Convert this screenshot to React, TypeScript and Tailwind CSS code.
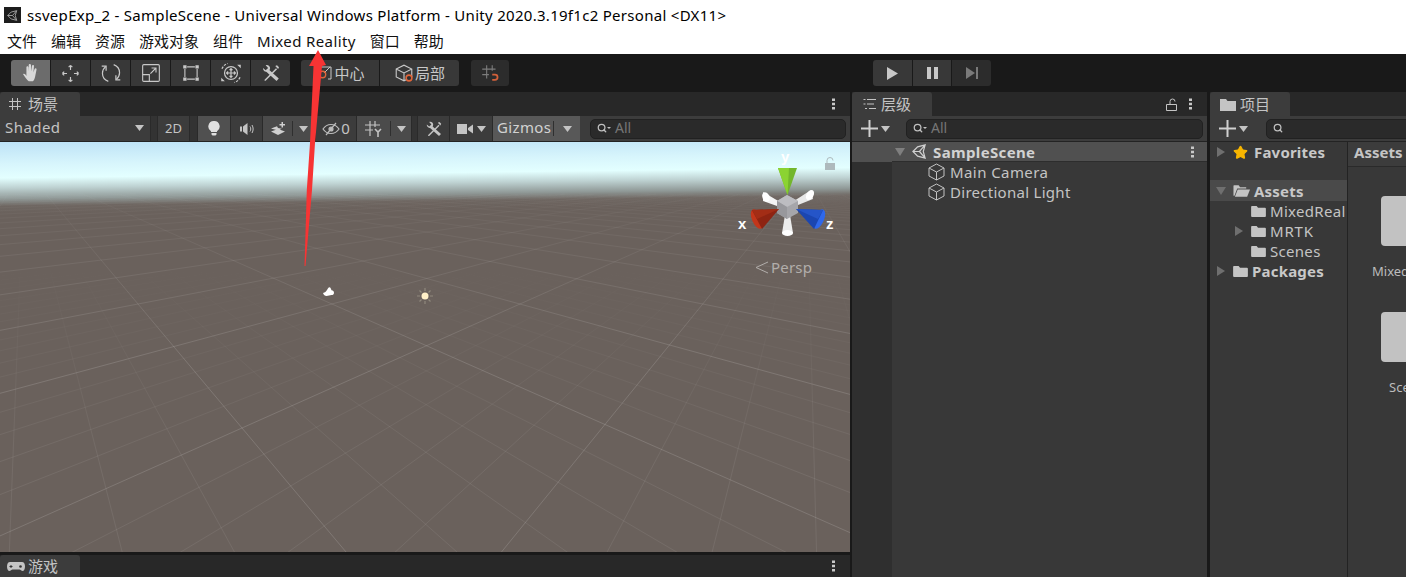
import type { ReactNode } from "react";
import { Search, Star } from "lucide-react";

// grid corners measured off the scene view, viewport-local
const QUAD = [
  [138, 162],
  [363, 119],
  [520, 162],
  [242, 286],
];

function makeProjector() {
  const [[x0, y0], [x1, y1], [x2, y2], [x3, y3]] = QUAD;
  const dx1 = x1 - x2;
  const dx2 = x3 - x2;
  const sx = x0 - x1 + x2 - x3;
  const dy1 = y1 - y2;
  const dy2 = y3 - y2;
  const sy = y0 - y1 + y2 - y3;
  const den = dx1 * dy2 - dx2 * dy1;
  const g = (sx * dy2 - dx2 * sy) / den;
  const h = (dx1 * sy - sx * dy1) / den;
  const a = x1 - x0 + g * x1;
  const b = x3 - x0 + h * x3;
  const d = y1 - y0 + g * y1;
  const e = y3 - y0 + h * y3;
  return (u: number, v: number): [number, number] | null => {
    const s = u / 2;
    const t = (v + 1) / 2;
    const w = g * s + h * t + 1;
    if (w <= 0.02) return null;
    return [(a * s + b * t + x0) / w, (d * s + e * t + y0) / w];
  };
}

function gridSegments(step: number, skipMajor: boolean) {
  const project = makeProjector();
  const out: string[] = [];
  const RANGE = 30;
  const count = Math.round((RANGE * 2) / step);
  for (let i = 0; i <= count; i++) {
    const k = -RANGE + i * step;
    if (skipMajor && Math.abs(k - Math.round(k)) < 0.001) continue;
    for (const axis of [0, 1]) {
      let first: [number, number] | null = null;
      let last: [number, number] | null = null;
      for (let m = -RANGE; m <= RANGE; m += 0.5) {
        const p = axis === 0 ? project(k, m) : project(m, k);
        if (!p || p[1] < 52) continue;
        if (!first) first = p;
        last = p;
      }
      if (first && last) {
        out.push(`M${first[0].toFixed(1)} ${first[1].toFixed(1)}L${last[0].toFixed(1)} ${last[1].toFixed(1)}`);
      }
    }
  }
  return out.join("");
}

const majorPath = gridSegments(1, false);
const minorPath = gridSegments(0.2, true);

function Ico({ size = 18, children }: { size?: number; children: ReactNode }) {
  return (
    <svg width={size} height={size} viewBox="0 0 18 18" fill="none" stroke="currentColor" strokeWidth="1.2" className="shrink-0">
      {children}
    </svg>
  );
}

const HandIcon = () => (
  <Ico size={23}>
    <path
      d="M3.2 9.5c.9-.7 1.7.1 2.6 1.5V4.2c0-1.2 1.5-1.2 1.6 0l.2 3.3V2.6c0-1.3 1.7-1.3 1.8 0l.1 4.9.6-4.3c.2-1.2 1.8-1 1.6.3l-.4 4.8.9-2.8c.4-1.1 1.8-.7 1.5.5l-1.1 5.5c-.3 1.8-1.2 3-1.8 3.6H7.6C6.2 13.8 4.6 11.6 3.2 9.5z"
      fill="#d8d8d8"
      stroke="none"
    />
  </Ico>
);
const MoveIcon = () => (
  <Ico size={21}>
    <path d="M9 6V2M9 2 7.400 3.600M9 2l1.600 1.600M9 12v4m0 0-1.600-1.600M9 16l1.600-1.600M6 9H2m0 0 1.600-1.600M2 9l1.600 1.600M12 9h4m0 0-1.600-1.600M16 9l-1.600 1.600" strokeWidth="1" />
  </Ico>
);
const RotateIcon = () => (
  <Ico size={22}>
    <path d="M6.800 15.800C3.800 14.700 2 12 2 9.200c0-2.200 1-4 2.600-5.400M11.200 2.200c3 1.100 4.800 3.800 4.800 6.600 0 2.200-1 4-2.600 5.400" strokeWidth="1" />
    <path d="M5 7.200V3.400H1.400M13 10.800v3.800h3.600" strokeWidth="1" />
  </Ico>
);
const ScaleIcon = () => (
  <Ico size={20}>
    <rect x="1.500" y="1.500" width="15" height="15" rx="1" strokeWidth="1" />
    <path d="M1.500 10.500H7.500V16.500M8.500 9.500l5-5M9.500 4.500h4v4" strokeWidth="1" />
  </Ico>
);
const RectIcon = () => (
  <Ico size={20}>
    <path d="M3.500 3.500h11v11h-11z" strokeDasharray="7 4" strokeDashoffset="-2" strokeWidth="1" />
    <path d="M2 2h3v3H2zM13 2h3v3h-3zM2 13h3v3H2zM13 13h3v3h-3z" fill="currentColor" stroke="none" />
  </Ico>
);
const TransformIcon = () => (
  <Ico size={22}>
    <circle cx="9" cy="9" r="5.300" strokeWidth="1" />
    <path d="M9 5.500v7M5.500 9h7M7.800 6.600 9 5.400l1.200 1.200M7.800 11.400 9 12.600l1.200-1.200M6.600 7.800 5.400 9l1.200 1.200M11.400 7.800 12.600 9l-1.200 1.200" strokeWidth="1" />
    <path d="M1.600 5.500C2.600 3.200 4.200 1.900 6.200 1.200M16.400 12.500c-1 2.300-2.600 3.600-4.600 4.300" strokeDasharray="2 1" strokeWidth="1" />
    <path d="M1 15.800V12.800l3 3zM17 2.200v3l-3-3z" fill="currentColor" stroke="none" />
  </Ico>
);
const ToolsIcon = ({ size = 20 }: { size?: number }) => (
  <Ico size={size}>
    <path d="M5.500 6.500 15 15" strokeWidth="3" />
    <path d="M1.800 4.400 4.200 6.600l2.200-2.200L4.200 2c1.900-.7 4 .6 4 2.800 0 1.700-1.800 3.300-3.500 3.100-1.800-.2-3.100-1.800-2.900-3.500z" fill="currentColor" stroke="none" />
    <path d="M3.200 15 13.500 4.700l1 1L4.200 16H3.200z" fill="currentColor" stroke="none" />
    <path d="M12.800 2.800 15.400 5.400 16.200 3.800 14.400 2z" fill="currentColor" stroke="none" />
  </Ico>
);
const CenterIcon = () => (
  <Ico size={18}>
    <path d="M4 6V3h12v12h-3" strokeWidth="1" />
    <path d="M15 3 9 9" strokeWidth="1" />
    <circle cx="7.500" cy="10.500" r="3.200" stroke="#e0653a" strokeWidth="1.400" />
  </Ico>
);
const LocalIcon = () => (
  <Ico size={20}>
    <path d="M2 5.500 9 2l7 3.500v7L9 16l-7-3.500zM2 5.500 9 9l7-3.500M9 9v7" strokeWidth="1" />
    <circle cx="13.500" cy="13.500" r="2.600" fill="#2f2f2f" stroke="#e0653a" strokeWidth="1.400" />
  </Ico>
);
const SnapIcon = () => (
  <Ico size={20}>
    <path d="M6 2v12M11 2v5M2 5.500h12M2 10.500h6" strokeWidth="1" stroke="#7c7c7c" />
    <path d="M11 10.500h2.500a2.300 2.300 0 0 1 0 4.600H11" strokeWidth="1.600" stroke="#d2603a" />
  </Ico>
);
const Caret = ({ className = "text-[#c4c4c4]" }: { className?: string }) => (
  <svg width="9" height="6" viewBox="0 0 9 6" className={`shrink-0 ${className}`}>
    <path d="M0 0h9L4.500 6z" fill="currentColor" />
  </svg>
);
const MoreDots = ({ className = "" }: { className?: string }) => (
  <svg width="3" height="12" viewBox="0 0 3 12" className={`shrink-0 ${className}`}>
    <path d="M0 .5h3v2.500H0zM0 4.800h3v2.500H0zM0 9h3v2.500H0z" fill="#c8c8c8" />
  </svg>
);
const CubeIcon = () => (
  <svg width="17" height="18" viewBox="0 0 17 18" fill="none" stroke="#c2c2c2" strokeWidth="1" className="shrink-0">
    <path d="M8.500 1 16 5v8l-7.500 4L1 13V5zM1 5l7.500 4L16 5M8.500 9v8" />
  </svg>
);
const FolderIcon = () => (
  <svg width="15" height="12" viewBox="0 0 16 13" className="shrink-0">
    <path d="M1 1h5l1.500 2H15a1 1 0 0 1 1 1v8a1 1 0 0 1-1 1H1a1 1 0 0 1-1-1V2a1 1 0 0 1 1-1z" fill="#c4c4c4" />
  </svg>
);
const OpenFolderIcon = () => (
  <svg width="17" height="13" viewBox="0 0 18 13" className="shrink-0">
    <path d="M1 1h5l1.500 2H14v1.500H4.500L1.600 12H.5V1.500z" fill="#c4c4c4" />
    <path d="M5 5.500h13L15 13H2z" fill="#c4c4c4" />
  </svg>
);
const UnityLogo = ({ size = 16, color = "#d0d0d0" }: { size?: number; color?: string }) => (
  <svg width={size} height={size} viewBox="0 0 16 16" fill="none" stroke={color} strokeWidth="1.300" className="shrink-0">
    <path d="M1 8l5-5 8-2-2 7 2 7-8-2zM1 8h7l6-7M8 8l6 7" />
  </svg>
);

function ToolButton({ w, active, dim, children }: { w: string; active?: boolean; dim?: boolean; children: ReactNode }) {
  return (
    <div className={`${w} flex h-full items-center justify-center gap-[1px] ${active ? "bg-[#6c6c6c]" : dim ? "bg-[#2c2c2c]" : "bg-[#383838]"} text-[#c8c8c8]`}>
      {children}
    </div>
  );
}

function TabBar({ icon, label, right, short }: { icon: ReactNode; label: string; right?: ReactNode; short?: boolean }) {
  return (
    <div className={`flex ${short ? "h-[22px]" : "h-[24px]"} shrink-0 items-stretch bg-[#282828]`}>
      <div className={`flex w-[80px] items-center gap-[3px] rounded-t-[3px] bg-[#3c3c3c] pl-[8px] ${short ? "pt-[1px]" : ""} text-[15px] leading-none text-[#c4c4c4]`}>
        {icon}
        <span>{label}</span>
      </div>
      <div className="flex flex-1 items-center justify-end gap-[12px] pr-[15px]">{right}</div>
    </div>
  );
}

function SearchBox({ icon = true, text }: { icon?: boolean; text?: string }) {
  return (
    <div className="flex h-[20px] flex-1 items-center gap-[4px] rounded-[5px] border border-[#212121] bg-[#2a2a2a] pb-[1px] pl-[6px] text-[14px] leading-none text-[#767676]">
      <Search size={10} strokeWidth={3} className="text-[#c0c0c0]" />
      {icon && <span className="-ml-[4px] h-0 w-0 border-x-[2px] border-t-[2px] border-x-transparent border-t-[#c0c0c0]" />}
      {text && <span>{text}</span>}
    </div>
  );
}

function PlusMenu() {
  return (
    <div className="flex w-[50px] shrink-0 items-center gap-[3px] pl-[9px] text-[#d0d0d0]">
      <svg width="17" height="17" viewBox="0 0 17 17">
        <path d="M7.500 0h2v7.500H17v2H9.500V17h-2V9.500H0v-2h7.500z" fill="currentColor" />
      </svg>
      <Caret />
    </div>
  );
}

function SceneCell({ w, tone = "bg-[#3c3c3c]", children }: { w: string; tone?: string; children: ReactNode }) {
  return <div className={`${w} flex h-full shrink-0 items-center justify-center gap-[4px] border-r border-[#2a2a2a] ${tone} text-[#c4c4c4]`}>{children}</div>;
}

function Gizmo() {
  return (
    <svg width="120" height="135" viewBox="0 0 120 135" className="absolute left-[730px] top-[3px]">
      {/* white neutral cones */}
      <path d="M33 47 50 57 47 61 33 56z" fill="#f4f4f4" />
      <ellipse cx="36" cy="52" rx="3.500" ry="5" fill="#fff" transform="rotate(-25 36 52)" />
      <path d="M81 45 64 56l4 4 15-6z" fill="#e8e8e8" />
      <ellipse cx="80" cy="50" rx="3.500" ry="5.500" fill="#fff" transform="rotate(30 80 50)" />
      <path d="M55 70 52 88h11l-3-18z" fill="#ececec" />
      <ellipse cx="57.500" cy="88" rx="5.500" ry="3" fill="#fff" />
      {/* cube */}
      <path d="M57 50 68 56v12l-11 6-10-6V56z" fill="#a6a6aa" />
      <path d="M47 56 57 50l11 6-11 6z" fill="#bdbdc1" />
      <path d="M57 62v12l-10-6V56z" fill="#98989c" />
      {/* axis cones */}
      <path d="M48 23h19L57.500 50z" fill="#73b62c" />
      <path d="M48 23h11L57.500 50z" fill="#8bd332" />
      <ellipse cx="27" cy="74" rx="5" ry="10.500" fill="#c2361b" transform="rotate(-24 27 74)" />
      <path d="M49 64 22 65 32 84z" fill="#8e2412" />
      <path d="M49 64 22 65 27 74z" fill="#a32d16" />
      <ellipse cx="89" cy="74" rx="5" ry="10.500" fill="#2f68ea" transform="rotate(24 89 74)" />
      <path d="M66 64 93 65 84 84z" fill="#1b46b0" />
      <path d="M66 64 93 65 88 74z" fill="#2555c8" />
      <text x="51" y="17" fontFamily="Liberation Sans" fontWeight="700" fontSize="15" fill="#fff">y</text>
      <text x="8" y="84" fontFamily="Liberation Sans" fontWeight="700" fontSize="15" fill="#fff">x</text>
      <text x="96" y="84" fontFamily="Liberation Sans" fontWeight="700" fontSize="15" fill="#fff">z</text>
      <path d="M97 18v-2.500a3 3 0 0 1 6 0" fill="none" stroke="#aebabd" strokeWidth="1" />
      <rect x="95" y="18" width="10" height="7" fill="#aebabd" />
    </svg>
  );
}

function Viewport() {
  return (
    <div className="relative flex-1 overflow-hidden bg-[linear-gradient(179.3deg,#bde2f6_0px,#d7f5fc_22px,#e3ffff_36px,#bed2d2_46px,#8f9896_57px,#6e6661_64px,#6a615c_72px)]">
      <svg width="850" height="410" viewBox="0 0 850 410" className="absolute left-0 top-0">
        <defs>
          <linearGradient id="majorFade" gradientUnits="userSpaceOnUse" x1="0" y1="55" x2="0" y2="220">
            <stop offset="0" stopColor="#fff" stopOpacity="0.02" />
            <stop offset="1" stopColor="#fff" stopOpacity="0.14" />
          </linearGradient>
          <linearGradient id="minorFade" gradientUnits="userSpaceOnUse" x1="0" y1="120" x2="0" y2="320">
            <stop offset="0" stopColor="#fff" stopOpacity="0" />
            <stop offset="1" stopColor="#fff" stopOpacity="0.07" />
          </linearGradient>
        </defs>
        <path d={minorPath} stroke="url(#minorFade)" strokeWidth="1" fill="none" />
        <path d={majorPath} stroke="url(#majorFade)" strokeWidth="1" fill="none" />
        <path d="M323 151c2-.5 3-1.500 4-3 .5-1 1.500-2.800 2.500-2.800s1.500 1.500 2 3c1.500 0 2.500 1 2.500 2.500 0 1.500-1 2.300-2.500 2.300l-5 1c-1.500 0-3-1-3.500-3z" fill="#fff" />
        <g stroke="#8f887c" strokeWidth="1.200">
          <path d="M425 146v3M425 159v3M417 154h3M430 154h3M419.500 148.500l2 2M428.500 157.500l2 2M419.500 159.500l2-2M428.500 150.500l2-2" />
        </g>
        <circle cx="425" cy="154" r="3.500" fill="#fff0c8" />
      </svg>
      <Gizmo />
      <div className="absolute left-[755px] top-[115px] flex items-center gap-[3px] text-[15px] leading-[20px] text-[#b2aeab]">
        <svg width="13" height="13" viewBox="0 0 13 13" fill="none" stroke="currentColor" strokeWidth="1">
          <path d="M13 1 1 6.500 13 12" />
        </svg>
        <span className="tracking-[0.2px]">Persp</span>
      </div>
    </div>
  );
}

function SceneToolbar() {
  return (
    <div className="flex h-[26px] shrink-0 items-stretch border-b border-[#232323] bg-[#3c3c3c] text-[15px] leading-none">
      <div className="flex w-[150px] shrink-0 items-center justify-between pb-[2px] pl-[5px] pr-[6px] text-[#c4c4c4]">
        <span className="tracking-[0.45px]">Shaded</span>
        <Caret />
      </div>
      <div className="w-[8px] shrink-0 border-x border-[#2a2a2a] bg-[#333333]" />
      <SceneCell w="w-[32px]">
        <span className="text-[13px]">2D</span>
      </SceneCell>
      <div className="w-[8px] shrink-0 border-r border-[#2a2a2a] bg-[#333333]" />
      <SceneCell w="w-[33px]" tone="bg-[#505050]">
        <svg width="12" height="15" viewBox="0 0 12 15">
          <path d="M6 0a5.500 5.500 0 0 1 3 10.200V11H3v-.8A5.500 5.500 0 0 1 6 0zM3.500 12h5v1.500l-1 1h-3l-1-1z" fill="#e0e0e0" />
        </svg>
      </SceneCell>
      <SceneCell w="w-[32px]">
        <svg width="16" height="12" viewBox="0 0 16 12">
          <path d="M1 3.500h2v5H1zM4 3.500 8.500 0v12L4 8.500z" fill="#c4c4c4" />
          <path d="M11 3.500c1 1.500 1 3.500 0 5M13 2c1.500 2.500 1.500 5.500 0 8" stroke="#c4c4c4" fill="none" />
        </svg>
      </SceneCell>
      <div className="flex w-[53px] shrink-0 items-center gap-[6px] border-r border-[#2a2a2a] bg-[#4b4b4b] pl-[7px]">
        <svg width="16" height="14" viewBox="0 0 16 14">
          <path d="M1 9.500 8 7l7 2.500L8 13zM1 6.500 7 4.200l1 1.800 3.800.7L8 8.500zM11.500 0h1.500v2h2v1.500h-2v2h-1.500v-2h-2V2h2z" fill="#d0d0d0" />
        </svg>
        <div className="h-[15px] w-px bg-[#2f2f2f]" />
        <Caret />
      </div>
      <SceneCell w="w-[41px]">
        <svg width="18" height="14" viewBox="0 0 18 14" fill="none" stroke="#bdbdbd" strokeWidth="1.200">
          <path d="M1 7c2-3 5-4.500 8-4.500S15 4 17 7c-2 3-5 4.500-8 4.500S3 10 1 7zM4 13 14 1" />
          <circle cx="9" cy="7" r="2" fill="#bdbdbd" />
        </svg>
        <span className="-ml-[3px] pb-[1px]">0</span>
      </SceneCell>
      <div className="flex w-[55px] shrink-0 items-center border-r border-[#2a2a2a] bg-[#4b4b4b]">
        <div className="flex w-[33px] justify-center">
          <svg width="18" height="16" viewBox="0 0 18 16" fill="none" stroke="#c4c4c4" strokeWidth="1.200">
            <path d="M5 0v15M10 0v6M0 4h15M0 9h8" />
            <path d="M10 8l3 3 3-3M13 11v5" strokeWidth="1.600" />
          </svg>
        </div>
        <div className="h-[15px] w-px bg-[#2f2f2f]" />
        <div className="flex flex-1 justify-center">
          <Caret />
        </div>
      </div>
      <div className="w-[6px] shrink-0 border-r border-[#2a2a2a] bg-[#333333]" />
      <SceneCell w="w-[32px]">
        <ToolsIcon size={18} />
      </SceneCell>
      <SceneCell w="w-[43px]">
        <svg width="16" height="12" viewBox="0 0 16 12">
          <path d="M0 1h10v10H0zM11 5l5-3.500v9L11 7z" fill="#c4c4c4" />
        </svg>
        <Caret />
      </SceneCell>
      <div className="flex w-[87px] shrink-0 items-center bg-[#585858] text-[#d2d2d2]">
        <span className="w-[60px] pb-[2px] pl-[4px] tracking-[0.35px]">Gizmos</span>
        <div className="h-[15px] w-px bg-[#2f2f2f]" />
        <div className="flex flex-1 justify-center">
          <Caret />
        </div>
      </div>
      <div className="flex flex-1 items-center px-[4px] pl-[10px]">
        <SearchBox text="All" />
      </div>
    </div>
  );
}

function ProjectPanel() {
  const rowBold = "font-bold text-[#c8c8c8] tracking-[0.2px]";
  return (
    <div className="flex w-[196px] shrink-0 flex-col bg-[#383838]">
      <TabBar
        icon={
          <svg width="16" height="13" viewBox="0 0 16 13" className="ml-[2px] mr-[1px] shrink-0">
            <path d="M0 1h6l1.500 2H16v10H0z" fill="#c4c4c4" />
          </svg>
        }
        label="项目"
      />
      <div className="flex h-[26px] shrink-0 items-center border-b border-[#232323] bg-[#3c3c3c]">
        <PlusMenu />
        <div className="-mr-[20px] ml-[6px] flex flex-1">
          <SearchBox icon={false} />
        </div>
      </div>
      <div className="flex min-h-0 flex-1 overflow-hidden">
        <div className="w-[138px] shrink-0 overflow-hidden border-r border-[#232323] text-[15px] leading-[20px]">
          <div className="flex h-[20px] items-center pl-[7px]">
            <span className="h-0 w-0 border-y-[5px] border-l-[8px] border-y-transparent border-l-[#6f6f6f]" />
            <Star size={15} fill="#f7b500" stroke="#f7b500" className="ml-[8px]" />
            <span className={`ml-[6px] ${rowBold}`}>Favorites</span>
          </div>
          <div className="mt-[18px] flex h-[21px] items-center bg-[#4a4a4a] pl-[6px]">
            <span className="h-0 w-0 border-x-[5px] border-t-[8px] border-x-transparent border-t-[#6f6f6f]" />
            <span className="ml-[7px] flex">
              <OpenFolderIcon />
            </span>
            <span className={`ml-[4px] ${rowBold}`}>Assets</span>
          </div>
          <div className="flex h-[20px] items-center pl-[41px] text-[#c4c4c4]">
            <FolderIcon />
            <span className="ml-[4px] whitespace-nowrap tracking-[0.3px]">MixedReal</span>
          </div>
          <div className="flex h-[20px] items-center pl-[25px] text-[#c4c4c4]">
            <span className="h-0 w-0 border-y-[5px] border-l-[8px] border-y-transparent border-l-[#6f6f6f]" />
            <span className="ml-[8px] flex">
              <FolderIcon />
            </span>
            <span className="ml-[4px] tracking-[0.8px]">MRTK</span>
          </div>
          <div className="flex h-[20px] items-center pl-[41px] text-[#c4c4c4]">
            <FolderIcon />
            <span className="ml-[4px] tracking-[0.3px]">Scenes</span>
          </div>
          <div className="flex h-[20px] items-center pl-[7px]">
            <span className="h-0 w-0 border-y-[5px] border-l-[8px] border-y-transparent border-l-[#6f6f6f]" />
            <span className="ml-[8px] flex">
              <FolderIcon />
            </span>
            <span className={`ml-[4px] ${rowBold}`}>Packages</span>
          </div>
        </div>
        <div className="relative flex-1 overflow-hidden">
          <div className="flex h-[25px] items-center border-b border-[#2a2a2a] bg-[#3c3c3c] pb-[3px] pl-[6px] text-[15px] font-bold text-[#c4c4c4]">Assets</div>
          <div className="flex flex-col pl-[33px] pt-[29px]">
            <div className="h-[50px] w-[60px] rounded-[4px] bg-[#c2c2c2]" />
            <div className="-ml-[9px] mt-[16px] h-[20px] text-[13px] leading-[18px] text-[#bcbcbc]">Mixed</div>
            <div className="mt-[30px] h-[50px] w-[60px] rounded-[4px] bg-[#c2c2c2]" />
            <div className="ml-[8px] mt-[16px] text-[13px] leading-[18px] text-[#bcbcbc]">Sce</div>
          </div>
        </div>
      </div>
    </div>
  );
}

export default function App() {
  return (
    <div className="relative flex h-[577px] w-[1406px] flex-col overflow-hidden bg-[#191919] font-['Noto_Sans','Noto_Sans_CJK_SC',sans-serif]">
      {/* window chrome */}
      <div className="flex h-[30px] shrink-0 items-center bg-white pl-[4px] text-[15px] text-black">
        <div className="flex h-[16px] w-[17px] items-center justify-center bg-[#1d1d1d]">
          <UnityLogo size={11} color="#a8a8a8" />
        </div>
        <span className="ml-[6px] whitespace-nowrap tracking-[0.29px]">ssvepExp_2 - SampleScene - Universal Windows Platform - Unity 2020.3.19f1c2 Personal &lt;DX11&gt;</span>
      </div>
      <div className="flex h-[24px] shrink-0 items-start gap-[14px] bg-white pl-[7px] text-[15px] leading-[22px] text-[#111]">
        {["文件", "编辑", "资源", "游戏对象", "组件"].map((m) => (
          <span key={m}>{m}</span>
        ))}
        <span className="tracking-[0.38px]">Mixed Reality</span>
        {["窗口", "帮助"].map((m) => (
          <span key={m}>{m}</span>
        ))}
      </div>

      {/* main toolbar */}
      <div className="relative flex h-[38px] shrink-0 items-start pl-[11px] pt-[6px]">
        <div className="flex h-[26px] w-[279px] gap-px overflow-hidden rounded-[3px]">
          <ToolButton w="w-[39px]" active>
            <HandIcon />
          </ToolButton>
          <ToolButton w="w-[39px]">
            <MoveIcon />
          </ToolButton>
          <ToolButton w="w-[39px]">
            <RotateIcon />
          </ToolButton>
          <ToolButton w="w-[39px]">
            <ScaleIcon />
          </ToolButton>
          <ToolButton w="w-[39px]">
            <RectIcon />
          </ToolButton>
          <ToolButton w="w-[39px]">
            <TransformIcon />
          </ToolButton>
          <ToolButton w="w-[39px]">
            <ToolsIcon />
          </ToolButton>
        </div>
        <div className="ml-[11px] flex h-[26px] w-[158px] gap-px overflow-hidden rounded-[3px] text-[15px] leading-none">
          <ToolButton w="w-[78px]">
            <CenterIcon />
            <span>中心</span>
          </ToolButton>
          <ToolButton w="w-[79px]">
            <LocalIcon />
            <span>局部</span>
          </ToolButton>
        </div>
        <div className="ml-[12px] flex h-[26px] w-[38px] overflow-hidden rounded-[3px]">
          <ToolButton w="w-[38px]" dim>
            <SnapIcon />
          </ToolButton>
        </div>
        <div className="ml-[364px] flex h-[26px] w-[118px] gap-px overflow-hidden rounded-[3px]">
          <ToolButton w="w-[39px]">
            <svg width="11" height="13" viewBox="0 0 11 13">
              <path d="M0 0l11 6.500L0 13z" fill="#c8c8c8" />
            </svg>
          </ToolButton>
          <ToolButton w="w-[39px]">
            <svg width="11" height="12" viewBox="0 0 11 12">
              <path d="M0 0h4v12H0zM7 0h4v12H7z" fill="#c8c8c8" />
            </svg>
          </ToolButton>
          <ToolButton w="w-[39px]" dim>
            <svg width="12" height="12" viewBox="0 0 12 12">
              <path d="M0 0l9 6-9 6z" fill="#7a7a7a" />
              <path d="M10 0h2v12h-2z" fill="#7a7a7a" />
            </svg>
          </ToolButton>
        </div>
      </div>

      {/* dock */}
      <div className="flex min-h-0 flex-1">
        <div className="flex w-[850px] shrink-0 flex-col">
          <TabBar
            icon={
              <svg width="14" height="14" viewBox="0 0 14 14" className="mr-[3px] shrink-0" fill="none" stroke="#c4c4c4">
                <path d="M4.500 1v12M9.500 1v12M1 4.500h12M1 9.500h12" />
              </svg>
            }
            label="场景"
            right={<MoreDots />}
          />
          <SceneToolbar />
          <Viewport />
          <div className="h-[3px] shrink-0" />
          <TabBar
            short
            icon={
              <svg width="18" height="11" viewBox="0 0 18 11" className="-ml-[1px] shrink-0">
                <path d="M3 1h12c2 0 3 2 3 4.500S17 10 15.500 10c-1 0-2-1.500-3-1.500h-7c-1 0-2 1.500-3 1.500C1 10 0 8 0 5.500S1 1 3 1z" fill="#c4c4c4" />
                <path d="M4 4v3M2.500 5.500h3" stroke="#333" />
                <circle cx="13.500" cy="5.500" r="1.300" fill="#333" />
              </svg>
            }
            label="游戏"
            right={<MoreDots />}
          />
        </div>
        <div className="ml-[2px] flex w-[355px] shrink-0 flex-col bg-[#383838]">
          <TabBar
            icon={
              <svg width="13" height="12" viewBox="0 0 13 12" className="ml-[3px] mr-[2px] shrink-0" fill="none" stroke="#c4c4c4">
                <path d="M4 1.500h9M4 6h7M6 10.500h7M.5 1.500h2M.5 6h2M2 10.500h2" />
              </svg>
            }
            label="层级"
            right={
              <>
                <svg width="11" height="13" viewBox="0 0 11 13" fill="none" stroke="#c4c4c4" className="shrink-0">
                  <path d="M.5 6.500h10v6H.5zM4 6.500V3.500a2.500 2.500 0 0 1 5 0" />
                </svg>
                <MoreDots />
              </>
            }
          />
          <div className="flex h-[26px] shrink-0 items-center border-b border-[#232323] bg-[#3c3c3c] pr-[4px]">
            <PlusMenu />
            <div className="ml-[4px] flex flex-1">
              <SearchBox text="All" />
            </div>
          </div>
          <div className="flex min-h-0 flex-1">
            <div className="w-[40px] shrink-0 bg-[#2f2f2f]">
              <div className="h-[20px] bg-[#505050]" />
            </div>
            <div className="flex-1 text-[15px] leading-[20px] text-[#c4c4c4]">
              <div className="flex h-[20px] items-center border-b border-[#2d2d2d] bg-[#505050] pr-[13px]">
                <span className="ml-[3px] h-0 w-0 border-x-[5px] border-t-[8px] border-x-transparent border-t-[#7f7f7f]" />
                <span className="ml-[7px] flex">
                  <UnityLogo size={15} />
                </span>
                <span className="ml-[6px] font-bold tracking-[0.36px] text-[#d2d2d2]">SampleScene</span>
                <MoreDots className="ml-auto" />
              </div>
              <div className="flex h-[20px] items-center gap-[5px] pl-[36px]">
                <CubeIcon />
                <span className="tracking-[0.42px]">Main Camera</span>
              </div>
              <div className="flex h-[20px] items-center gap-[5px] pl-[36px]">
                <CubeIcon />
                <span className="tracking-[0.28px]">Directional Light</span>
              </div>
            </div>
          </div>
        </div>
        <div className="ml-[3px] flex">
          <ProjectPanel />
        </div>
      </div>

      {/* annotation arrow drawn on top of the screenshot */}
      <svg width="40" height="230" viewBox="0 0 40 230" className="pointer-events-none absolute left-[295px] top-[45px]">
        <path d="M23 5 31 20 27 21 20 98 17 145 10.500 221 9.500 221 11.800 145 15 98 18.500 21 14 21z" fill="#f73434" />
      </svg>
    </div>
  );
}
